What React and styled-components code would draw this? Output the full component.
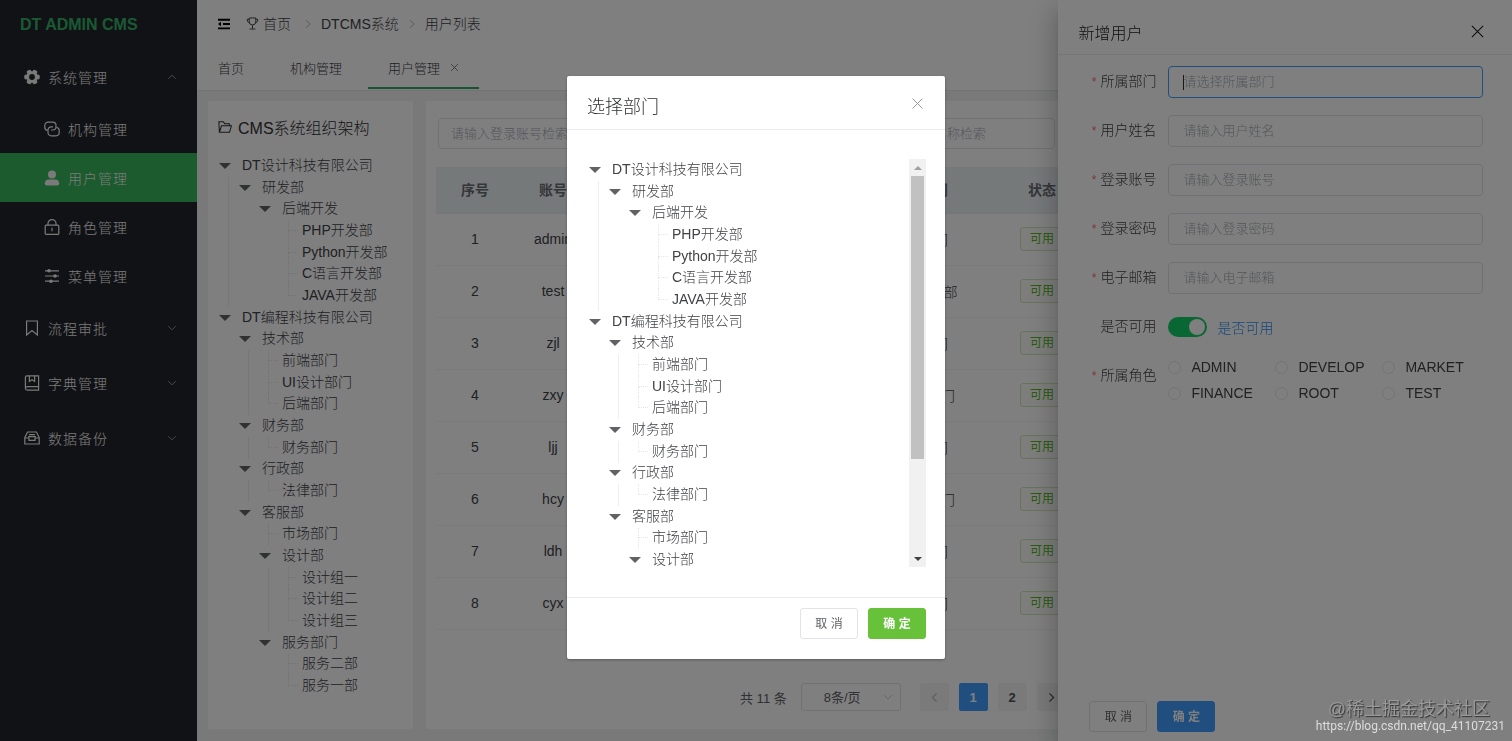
import { useState } from 'react';
import styled, { createGlobalStyle, css } from 'styled-components';

const menuTop = [
    { name: '流程审批', icon: 'bookmark' },
    { name: '字典管理', icon: 'book' },
    { name: '数据备份', icon: 'tray' },
];

const menuSystem = [
    { name: '机构管理', icon: 'link' },
    { name: '用户管理', icon: 'user', active: true },
    { name: '角色管理', icon: 'lock' },
    { name: '菜单管理', icon: 'sliders' },
];

const departments = [
    {
        name: 'DT设计科技有限公司',
        children: [
            {
                name: '研发部',
                children: [
                    {
                        name: '后端开发',
                        children: [{ name: 'PHP开发部' }, { name: 'Python开发部' }, { name: 'C语言开发部' }, { name: 'JAVA开发部' }],
                    },
                ],
            },
        ],
    },
    {
        name: 'DT编程科技有限公司',
        children: [
            { name: '技术部', children: [{ name: '前端部门' }, { name: 'UI设计部门' }, { name: '后端部门' }] },
            { name: '财务部', children: [{ name: '财务部门' }] },
            { name: '行政部', children: [{ name: '法律部门' }] },
            {
                name: '客服部',
                children: [
                    { name: '市场部门' },
                    { name: '设计部', children: [{ name: '设计组一' }, { name: '设计组二' }, { name: '设计组三' }] },
                    { name: '服务部门', children: [{ name: '服务二部' }, { name: '服务一部' }] },
                ],
            },
        ],
    },
];

const users = [
    { id: 1, account: 'admin', dept: '后端部门' },
    { id: 2, account: 'test', dept: 'JAVA开发部' },
    { id: 3, account: 'zjl', dept: '财务部门' },
    { id: 4, account: 'zxy', dept: 'UI设计部门' },
    { id: 5, account: 'ljj', dept: '前端部门' },
    { id: 6, account: 'hcy', dept: 'UI设计部门' },
    { id: 7, account: 'ldh', dept: '市场部门' },
    { id: 8, account: 'cyx', dept: '法律部门' },
];

const fields = [
    { id: 'dept', label: '所属部门', placeholder: '请选择所属部门', focused: true },
    { id: 'name', label: '用户姓名', placeholder: '请输入用户姓名' },
    { id: 'account', label: '登录账号', placeholder: '请输入登录账号' },
    { id: 'password', label: '登录密码', placeholder: '请输入登录密码' },
    { id: 'email', label: '电子邮箱', placeholder: '请输入电子邮箱' },
];

const roles = ['ADMIN', 'DEVELOP', 'MARKET', 'FINANCE', 'ROOT', 'TEST'];

// tree -> flat rows, each one knows which guide lines run through it
function flatten(nodes, guides = []) {
    return nodes.flatMap((node, i) => {
        const last = i === nodes.length - 1;
        const row = { name: node.name, guides, last, leaf: !node.children };
        return node.children ? [row, ...flatten(node.children, [...guides, !last])] : [row];
    });
}

const treeRows = flatten(departments);

const icons = {
    gear: (
        <>
            <circle cx="8" cy="8" r="4.3" strokeWidth="2.8" />
            {[0, 60, 120, 180, 240, 300].map((a) => (
                <path key={a} d="M12.6 5.4 15.2 5.8Q16.4 8 15.2 10.2L12.6 10.6Z" fill="currentColor" stroke="none" transform={`rotate(${a} 8 8)`} />
            ))}
        </>
    ),
    link: (
        <>
            <path d="M3.6 9.4A3.2 3.2 0 0 1 .8 6.2V4.4a3.2 3.2 0 0 1 3.2-3.2h4.8a3.2 3.2 0 0 1 3.2 3.2v1.4A3.2 3.2 0 0 1 8.8 9H7" />
            <path d="M12.4 6.4a3.2 3.2 0 0 1 2.8 3.2v2a3.2 3.2 0 0 1-3.2 3.2H7.2A3.2 3.2 0 0 1 4 11.6V9a3.2 3.2 0 0 1 3.2-3.2H9" />
        </>
    ),
    user: (
        <>
            <circle cx="8" cy="4.6" r="4" fill="currentColor" stroke="none" />
            <path d="M.8 13.2Q1.2 9.6 4.6 9.6H11.4Q14.8 9.6 15.2 13.2 15.3 15.4 13 15.4H3Q.7 15.4.8 13.2Z" fill="currentColor" stroke="none" />
        </>
    ),
    lock: (
        <>
            <rect x="1.2" y="6.2" width="13.6" height="9.2" rx="1" />
            <path d="M4 6.2V4.6a4 4 0 0 1 8 0v1.6M8 8.8v3.4" />
        </>
    ),
    sliders: (
        <>
            <path d="M1 2.8h14M1 8h14M1 13.2h14" />
            <g fill="currentColor" stroke="none">
                <circle cx="5" cy="2.8" r="1.8" />
                <circle cx="11" cy="8" r="1.8" />
                <circle cx="7" cy="13.2" r="1.8" />
            </g>
        </>
    ),
    bookmark: <path d="M2.6 1h10.8v14L8 10.6 2.6 15Z" />,
    book: (
        <>
            <path d="M1.4 13V2.2Q1.4.8 2.8.8H14.6V15.2H3.4Q1.4 15 1.4 13.2 1.5 11.8 3.2 11.6H14.6" />
            <path d="M5.4.8V6.4L8 4.8l2.6 1.6V.8" />
        </>
    ),
    tray: (
        <>
            <path d="M.8 7.6 3.6 2h8.8l2.8 5.6V14H.8Z" />
            <path d="M.8 8H5v2.4h6V8h4.2M5 4.6h6M4 6.6h8" />
        </>
    ),
    trophy: (
        <>
            <path d="M4 1.2h8v4.6a4 4 0 0 1-8 0ZM8 9.8v4.6M4.4 14.8h7.2" />
            <path d="M4 2.8H1.4Q1.2 6.6 4.4 7.2M12 2.8h2.6Q14.8 6.6 11.6 7.2" />
        </>
    ),
    folder: <path d="M1.6 14 1 2h5l1.6 2.2H13V6.6M1.6 14 4 6.6H15.4L13.2 14Z" />,
    fold: (
        <>
            <path d="M0 2.2h16M6.6 8H16M0 13.8h16" strokeWidth="2.6" />
            <path d="M0 8 4 5V11Z" fill="currentColor" stroke="none" />
        </>
    ),
    up: <path d="M2 11 8 5l6 6" />,
    down: <path d="M2 5l6 6 6-6" />,
    left: <path d="M11 2 5 8l6 6" />,
    right: <path d="M5 2l6 6-6 6" />,
    close: <path d="M2 2l12 12M14 2 2 14" />,
};

function Icon({ name, size = 16, stroke = 1.2 }) {
    return (
        <Svg width={size} height={size} viewBox="0 0 16 16" strokeWidth={stroke} aria-hidden="true">
            {icons[name]}
        </Svg>
    );
}

function Tree() {
    return (
        <TreeList>
            {treeRows.map((row, i) => (
                <TreeRow key={i}>
                    {row.guides.map((on, d) => (
                        <Guide key={d} $on={on} />
                    ))}
                    {row.leaf ? (
                        <LeafMark $last={row.last} />
                    ) : (
                        <CaretMark>
                            <svg width="12" height="6" viewBox="0 0 12 6" aria-hidden="true">
                                <path d="M0 0H12L6 6Z" fill="currentColor" />
                            </svg>
                        </CaretMark>
                    )}
                    <span>{row.name}</span>
                </TreeRow>
            ))}
        </TreeList>
    );
}

export default function App() {
    const [enabled, setEnabled] = useState(true);
    const [role, setRole] = useState('');

    return (
        <>
            <GlobalStyle />
            <Layout>
                <Sidebar>
                    <Logo>DT ADMIN CMS</Logo>
                    <MenuItem href="#">
                        <Icon name="gear" />
                        系统管理
                        <Arrow><Icon name="up" size={10} /></Arrow>
                    </MenuItem>
                    {menuSystem.map((m) => (
                        <SubItem href="#" key={m.name} $active={m.active}>
                            <Icon name={m.icon} />
                            {m.name}
                        </SubItem>
                    ))}
                    {menuTop.map((m) => (
                        <MenuItem href="#" key={m.name}>
                            <Icon name={m.icon} />
                            {m.name}
                            <Arrow><Icon name="down" size={10} /></Arrow>
                        </MenuItem>
                    ))}
                </Sidebar>

                <Main>
                    <Header>
                        <FoldButton aria-label="fold"><Icon name="fold" size={12} /></FoldButton>
                        <HomeCrumb href="#"><Icon name="trophy" size={13} />首页</HomeCrumb>
                        <Icon name="right" size={10} />
                        <Crumb href="#">DTCMS系统</Crumb>
                        <Icon name="right" size={10} />
                        <Crumb href="#">用户列表</Crumb>
                    </Header>
                    <Tabs>
                        <Tab>首页</Tab>
                        <Tab>机构管理</Tab>
                        <Tab $active>用户管理<Icon name="close" size={9} /></Tab>
                    </Tabs>

                    <Content>
                        <TreePanel>
                            <PanelTitle><Icon name="folder" size={14} />CMS系统组织架构</PanelTitle>
                            <Tree />
                        </TreePanel>
                        <ListPanel>
                            <Filters>
                                <FilterInput aria-label="账号" placeholder="请输入登录账号检索" />
                                <FilterInput aria-label="姓名" placeholder="请输入用户姓名检索" />
                                <FilterInput aria-label="名称" placeholder="请输入部门名称检索" />
                            </Filters>
                            <Table>
                                <colgroup>
                                    <Col $w={78} />
                                    <Col $w={78} />
                                    <Col $w={267} />
                                    <Col $w={122} />
                                    <Col $w={122} />
                                    <col />
                                </colgroup>
                                <thead>
                                    <tr>
                                        <th>序号</th>
                                        <th>账号</th>
                                        <th>姓名</th>
                                        <th>所属部门</th>
                                        <th>状态</th>
                                        <th>操作</th>
                                    </tr>
                                </thead>
                                <tbody>
                                    {users.map((u) => (
                                        <tr key={u.id}>
                                            <td>{u.id}</td>
                                            <td>{u.account}</td>
                                            <td />
                                            <td>{u.dept}</td>
                                            <td><Tag>可用</Tag></td>
                                            <td />
                                        </tr>
                                    ))}
                                </tbody>
                            </Table>
                            <Pagination>
                                <span>共 11 条</span>
                                <SizeBox>
                                    <select aria-label="每页条数"><option>8条/页</option></select>
                                    <Icon name="down" size={10} />
                                </SizeBox>
                                <Pages>
                                    <PageButton $muted aria-label="上一页"><Icon name="left" size={11} stroke={1.6} /></PageButton>
                                    <PageButton $active>1</PageButton>
                                    <PageButton>2</PageButton>
                                    <PageButton aria-label="下一页"><Icon name="right" size={11} stroke={1.8} /></PageButton>
                                </Pages>
                            </Pagination>
                        </ListPanel>
                    </Content>
                </Main>
            </Layout>

            <Drawer>
                <DrawerHeader>
                    新增用户
                    <IconButton $dark aria-label="关闭"><Icon name="close" size={15} /></IconButton>
                </DrawerHeader>
                <Form>
                    {fields.map((f) => (
                        <FormRow key={f.id}>
                            <Label htmlFor={f.id} $required>{f.label}</Label>
                            <InputBox $focused={f.focused}>
                                {f.focused && <TextCursor />}
                                <input id={f.id} placeholder={f.placeholder} />
                            </InputBox>
                        </FormRow>
                    ))}
                    <FormRow>
                        <Label htmlFor="enabled">是否可用</Label>
                        <Switch id="enabled" type="checkbox" checked={enabled} onChange={(e) => setEnabled(e.target.checked)} />
                        <SwitchText>是否可用</SwitchText>
                    </FormRow>
                    <FormRow>
                        <Label as="span" $required>所属角色</Label>
                        <RoleGrid>
                            {roles.map((r) => (
                                <Role key={r}>
                                    <input type="radio" name="role" checked={role === r} onChange={() => setRole(r)} />
                                    {r}
                                </Role>
                            ))}
                        </RoleGrid>
                    </FormRow>
                </Form>
                <DrawerFooter>
                    <Button>取 消</Button>
                    <Button $color="#409eff">确 定</Button>
                </DrawerFooter>
            </Drawer>

            <Mask>
                <Dialog role="dialog" aria-label="选择部门">
                    <DialogHeader>
                        选择部门
                        <IconButton aria-label="关闭"><Icon name="close" size={13} /></IconButton>
                    </DialogHeader>
                    <DialogBody>
                        <ScrollArea><Tree /></ScrollArea>
                        <ScrollBar>
                            <ScrollArrow $up />
                            <ScrollThumb />
                            <ScrollArrow />
                        </ScrollBar>
                    </DialogBody>
                    <DialogFooter>
                        <Button>取 消</Button>
                        <Button $color="#67c23a">确 定</Button>
                    </DialogFooter>
                </Dialog>
            </Mask>

            <Watermark>
                <strong>@稀土掘金技术社区</strong>
                <span>https://blog.csdn.net/qq_41107231</span>
            </Watermark>
        </>
    );
}

const GlobalStyle = createGlobalStyle`
    * {
        box-sizing: border-box;
    }
    body {
        margin: 0;
        overflow: hidden;
        font-family: "Liberation Sans", "Noto Sans CJK SC", sans-serif;
        font-size: 14px;
        font-weight: 300;
        color: #404246;
    }
    button, input, select {
        font: inherit;
        color: inherit;
    }
    input::placeholder {
        color: #a8acb4;
        opacity: 1;
    }
    a {
        color: inherit;
        text-decoration: none;
    }
`

const Svg = styled.svg`
    flex: none;
    fill: none;
    stroke: currentColor;
`

const Layout = styled.div`
    display: flex;
    height: 100vh;
`

const Sidebar = styled.nav`
    width: 197px;
    flex: none;
    background: #22252a;
    color: #f4f4f4;
    letter-spacing: 1px;
`

const Logo = styled.div`
    height: 49px;
    line-height: 49px;
    padding-left: 20px;
    font-size: 16px;
    font-weight: bold;
    letter-spacing: normal;
    color: #36b368;
`

const MenuItem = styled.a`
    display: flex;
    align-items: center;
    gap: 8px;
    height: 55px;
    padding: 0 20px 0 24px;
`

const SubItem = styled(MenuItem)`
    height: 49px;
    padding-left: 44px;
    background: ${({ $active }) => ($active ? '#36b65c' : 'transparent')};
`

const Arrow = styled.span`
    display: flex;
    margin-left: auto;
    color: #b0b0b0;
`

const Main = styled.main`
    flex: 1;
    min-width: 0;
    display: flex;
    flex-direction: column;
    background: #f2f3f5;
`

const Header = styled.header`
    display: flex;
    align-items: center;
    gap: 8px;
    height: 48px;
    padding-left: 21px;
    background: #fff;
    color: #909399;
`

const FoldButton = styled.button`
    display: flex;
    padding: 0;
    margin-right: 8px;
    border: 0;
    background: none;
    color: #000;
`

const Crumb = styled.a`
    display: flex;
    align-items: center;
    gap: 4px;
    padding-bottom: 2px;
    color: #404246;
`

const HomeCrumb = styled(Crumb)`
    padding-right: 4px;
`

const Tabs = styled.div`
    display: flex;
    gap: 6px;
    height: 43px;
    flex: none;
    padding-left: 1px;
    background: #fff;
    border-bottom: 1px solid #e4e6ea;
`

const Tab = styled.button`
    display: flex;
    align-items: center;
    gap: 10px;
    padding: 0 20px;
    border: 0;
    border-bottom: 2px solid ${({ $active }) => ($active ? '#2fa86b' : 'transparent')};
    margin-bottom: 1px;
    background: none;
    font-size: 13px;
`

const Content = styled.div`
    flex: 1;
    min-height: 0;
    display: flex;
    gap: 13px;
    padding: 10px 11px 12px;
`

const Panel = styled.section`
    background: #fff;
    border-radius: 2px;
`

const TreePanel = styled(Panel)`
    width: 205px;
    flex: none;
    padding: 14px 9px;
`

const PanelTitle = styled.h2`
    display: flex;
    align-items: center;
    gap: 6px;
    margin: 0 0 16px;
    height: 24px;
    padding-left: 1px;
    font-size: 16px;
    font-weight: 300;
    color: #303133;
`

const TreeList = styled.ul`
    display: grid;
    grid-auto-rows: 1fr;
    height: 542px;
    margin: 0;
    padding: 0;
    list-style: none;
`

const TreeRow = styled.li`
    display: flex;
    align-items: center;
    line-height: 18px;
    white-space: nowrap;

    span {
        padding-bottom: 2px;
    }
`

const Guide = styled.i`
    align-self: stretch;
    width: 9px;
    margin-left: 11px;
    border-left: 1px solid ${({ $on }) => ($on ? '#eeeff2' : 'transparent')};
`

const LeafMark = styled.i`
    align-self: stretch;
    display: grid;
    grid-template-rows: 1fr 1fr;
    width: 10px;
    margin: 0 4px 0 11px;

    &::before, &::after {
        content: '';
        border-left: 1px dotted #e4e6ea;
    }
    &::before {
        border-bottom: 1px dotted #e4e6ea;
    }
    &::after {
        border-left-color: ${({ $last }) => ($last ? 'transparent' : '#e4e6ea')};
    }
`

const CaretMark = styled.i`
    display: flex;
    width: 23px;
    margin-left: 2px;
    color: #606266;
`

const ListPanel = styled(Panel)`
    flex: 1;
    min-width: 0;
    padding: 17px 10px 18px;
    display: flex;
    flex-direction: column;
`

const Filters = styled.div`
    display: flex;
    gap: 10px;
    padding-left: 2px;
    margin-bottom: 18px;
`

const FilterInput = styled.input`
    width: 199px;
    height: 31px;
    padding: 0 12px;
    border: 1px solid #e0e3e9;
    border-radius: 4px;
    background: #fff;
    font-size: 13px;
`

const Table = styled.table`
    width: 100%;
    table-layout: fixed;
    border-collapse: collapse;
    text-align: center;

    th {
        height: 46px;
        padding: 0 0 2px;
        background: #ecf2f5;
        border-bottom: 1px solid #e6ebf0;
        font-weight: bold;
        color: #6a6d72;
    }
    td {
        height: 52px;
        padding: 0;
        border-bottom: 1px solid #f4f5f7;
    }
`

const Col = styled.col`
    width: ${({ $w }) => $w}px;
`

const Tag = styled.span`
    display: inline-block;
    height: 24px;
    line-height: 22px;
    padding: 0 9px;
    border: 1px solid #cce8be;
    border-radius: 3px;
    background: #fafdf8;
    font-size: 12px;
    font-weight: 400;
    color: #57b52a;
`

const Pagination = styled.div`
    display: flex;
    align-items: center;
    gap: 14px;
    margin-top: auto;
    padding-left: 304px;
    font-size: 13px;
    font-weight: 400;
    color: #606266;
`

const SizeBox = styled.div`
    display: grid;
    grid-template-columns: 82px 18px;
    align-items: center;
    color: #b4b8c0;

    select {
        grid-area: 1 / 1 / 2 / 3;
        height: 28px;
        padding: 0 22px;
        appearance: none;
        border: 1px solid #e0e3e9;
        border-radius: 3px;
        background: #fff;
        color: #606266;
    }
    svg {
        grid-area: 1 / 2;
        pointer-events: none;
    }
`

const Pages = styled.div`
    display: flex;
    gap: 10px;
    margin-left: 5px;
`

const PageButton = styled.button`
    display: flex;
    align-items: center;
    justify-content: center;
    width: 29px;
    height: 28px;
    padding: 0;
    border: 0;
    border-radius: 2px;
    font-weight: bold;
    background: ${({ $active }) => ($active ? '#409eff' : '#f4f4f5')};
    color: ${({ $active, $muted }) => ($active ? '#fff' : $muted ? '#b4b8c0' : '#505255')};
`

const Drawer = styled.aside`
    position: fixed;
    top: 0;
    right: 0;
    bottom: 0;
    width: 30%;
    display: flex;
    flex-direction: column;
    background: #fff;
    box-shadow: 0 8px 10px -5px rgba(0, 0, 0, .2), 0 16px 24px 2px rgba(0, 0, 0, .14), 0 6px 30px 5px rgba(0, 0, 0, .12);
`

const DrawerHeader = styled.header`
    display: flex;
    align-items: center;
    justify-content: space-between;
    height: 55px;
    padding: 10px 27px 0 20px;
    border-bottom: 1px solid #e8eaee;
    font-size: 16px;
    color: #202124;
`

const IconButton = styled.button`
    display: flex;
    padding: 0;
    margin-bottom: 2px;
    border: 0;
    background: none;
    color: ${({ $dark }) => ($dark ? '#202124' : '#909399')};
`

const Form = styled.form`
    display: grid;
    grid-template-columns: 100%;
    gap: 17px;
    padding: 11px 29px 0 0;
`

const FormRow = styled.div`
    display: flex;
    align-items: center;
    height: 32px;
`

const Label = styled.label`
    flex: none;
    width: 98px;
    margin-right: 12px;
    padding-bottom: 4px;
    text-align: right;

    ${({ $required }) => $required && css`
        &::before {
            content: '*';
            margin-right: 4px;
            font-size: 12px;
            color: #f56c6c;
        }
    `}
`

const InputBox = styled.div`
    flex: 1;
    display: flex;
    align-items: center;
    height: 32px;
    padding: 0 14px;
    border: 1px solid ${({ $focused }) => ($focused ? '#409eff' : '#e0e3e9')};
    border-radius: 4px;
    font-size: 13px;

    input {
        flex: 1;
        min-width: 0;
        padding: 0 0 2px;
        border: 0;
        outline: 0;
        background: none;
    }
`

const TextCursor = styled.i`
    width: 1px;
    height: 15px;
    margin-right: -1px;
    background: #303133;
`

const Switch = styled.input`
    appearance: none;
    display: flex;
    justify-content: flex-end;
    width: 39px;
    height: 20px;
    margin: 0 10px 0 0;
    padding: 2px;
    border-radius: 10px;
    background: #13ce66;

    &::before {
        content: '';
        width: 16px;
        height: 16px;
        border-radius: 50%;
        background: #fff;
    }
`

const SwitchText = styled.span`
    color: #2f8ff5;
`

const RoleGrid = styled.div`
    flex: 1;
    display: grid;
    grid-template-columns: 107px 107px 1fr;
    grid-auto-rows: 26px;
    padding-top: 8px;
`

const Role = styled.label`
    display: flex;
    align-items: center;
    gap: 10px;

    input {
        appearance: none;
        flex: none;
        width: 13px;
        height: 13px;
        margin: 0;
        border: 1px solid #e4e7ed;
        border-radius: 50%;
    }
`

const Button = styled.button`
    width: 58px;
    height: 31px;
    padding: 0;
    border: 1px solid ${({ $color }) => $color || '#e0e3e9'};
    border-radius: 3px;
    background: ${({ $color }) => $color || '#fff'};
    color: ${({ $color }) => ($color ? '#fff' : '#606266')};
    font-size: 12px;
    line-height: 16px;
    font-weight: ${({ $color }) => ($color ? 'bold' : '400')};
`

const DrawerFooter = styled.footer`
    display: flex;
    gap: 10px;
    margin-top: auto;
    padding: 0 31px 9px;
`

const Mask = styled.div`
    position: fixed;
    inset: 0;
    display: flex;
    justify-content: center;
    align-items: flex-start;
    padding-top: 76px;
    background: rgba(0, 0, 0, .5);
`

const Dialog = styled.div`
    width: 25%;
    background: #fff;
    border-radius: 2px;
    box-shadow: 0 1px 3px rgba(0, 0, 0, .3);
`

const DialogHeader = styled.header`
    display: flex;
    align-items: center;
    justify-content: space-between;
    height: 54px;
    padding: 4px 21px 0 20px;
    border-bottom: 1px solid #e8eaee;
    font-size: 18px;
    color: #303133;
`

const DialogBody = styled.div`
    display: flex;
    padding: 29px 19px 30px 20px;
`

const ScrollArea = styled.div`
    flex: 1;
    height: 408px;
    overflow-y: auto;
    scrollbar-width: none;
`

const ScrollBar = styled.div`
    display: flex;
    flex-direction: column;
    width: 17px;
    background: #f1f1f1;
`

const ScrollArrow = styled.i`
    height: 17px;
    margin-top: ${({ $up }) => ($up ? '0' : 'auto')};
    display: grid;
    place-items: center;

    &::before {
        content: '';
        border: 4px solid transparent;
        ${({ $up }) => ($up ? 'border-top: 0; border-bottom-color: #a0a0a0;' : 'border-bottom: 0; border-top-color: #404040;')}
    }
`

const ScrollThumb = styled.i`
    height: 283px;
    margin: 0 2px;
    background: #c1c1c1;
`

const DialogFooter = styled.footer`
    display: flex;
    justify-content: flex-end;
    gap: 10px;
    padding: 10px 19px 20px;
    border-top: 1px solid #e8eaee;
`

const Watermark = styled.div`
    position: fixed;
    right: 7px;
    bottom: 7px;
    display: flex;
    flex-direction: column;
    align-items: flex-end;
    pointer-events: none;

    strong {
        padding-right: 15px;
        line-height: 18px;
        font-size: 18px;
        font-weight: 400;
        color: #999;
        text-shadow: 1px 1px 1px #333;
    }
    span {
        line-height: 16px;
        font-family: Roboto, "Liberation Sans", sans-serif;
        font-size: 12px;
        font-weight: 400;
        color: #ddd;
    }
`
